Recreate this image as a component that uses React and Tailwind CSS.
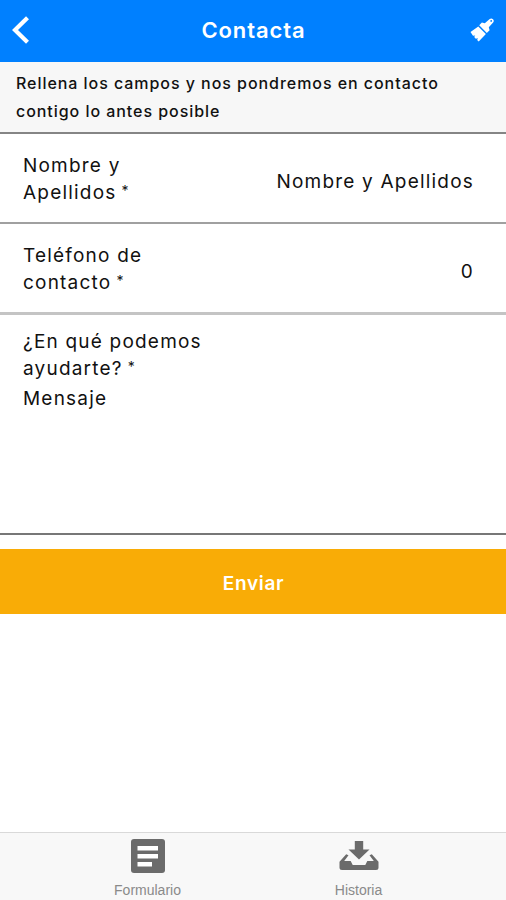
import clsx from 'clsx';

const fields = [
  {
    id: 'name',
    label: ['Nombre y', 'Apellidos'],
    value: 'Nombre y Apellidos',
    className: 'h-[90px] border-b-2 border-[#a0a0a0]',
  },
  {
    id: 'phone',
    label: ['Teléfono de', 'contacto'],
    value: '0',
    className: 'h-[91px] border-b-3 border-[#c4c4c4]',
  },
];

function BackIcon() {
  return (
    <svg width="17" height="28" viewBox="0 0 17 28" fill="none" stroke="white" strokeWidth="4.2">
      <path d="M15.5 1.8 3 14l12.5 12.2" />
    </svg>
  );
}

function BrushIcon() {
  return (
    <svg width="24" height="24" viewBox="0 0 24 24" fill="white">
      <path d="m.5 14 7.8-5.6 7.6 7.6-7.2 7.5-1.6-1.6.9-1.7-2.2.5-1.6-1.7 1-1.6-2.2.4Z" />
      <path d="m9.2 7.3 2.7-2.8 2.9.7 4.9-4.2a2.5 2.5 0 0 1 3.4 3.6l-4.3 4.7.8 3-2.8 2.7Z" />
      <circle cx="21.2" cy="2.9" r="0.9" fill="#0080ff" />
    </svg>
  );
}

function FormIcon() {
  return (
    <svg width="34" height="34" viewBox="0 0 34 34">
      <rect width="34" height="34" rx="3" fill="#6b6b6b" />
      <path d="M6.5 7H27v4.5H6.5zM6.5 15H27v4.5H6.5zM6.5 23H21v4.5H6.5z" fill="white" />
    </svg>
  );
}

function HistoryIcon() {
  return (
    <svg width="40" height="30" viewBox="0 0 40 30" fill="#6b6b6b">
      <path d="M15.8 0h8.4v8.5h6.3L20 18.5 9.5 8.5h6.3Z" />
      <path d="M9.5 14.2 5.2 20h6.5l2 4h12.6l2-4h6.5l-4.3-5.8 2.3-.9 6.7 7.4v5.8a2.5 2.5 0 0 1-2.5 2.5H3a2.5 2.5 0 0 1-2.5-2.5v-5.8l6.7-7.4Z" />
    </svg>
  );
}

// All the fields are required, so the last line always ends with the mark
function Label({ lines }) {
  return (
    <div>
      {lines.map((line, i) => (
        <div key={line}>
          {line}
          {i === lines.length - 1 && <span className="align-[3px] text-[14px] leading-none"> *</span>}
        </div>
      ))}
    </div>
  );
}

export default function App() {
  return (
    <div className="flex h-[900px] w-[506px] flex-col overflow-hidden bg-white font-['Inter',sans-serif] text-[#111]">
      <header className="grid h-[62px] shrink-0 grid-cols-[60px_1fr_60px] items-center bg-[#0080ff] text-white">
        <button className="pb-[3px] pl-3">
          <BackIcon />
        </button>
        <h1 className="pb-px pl-px text-center text-[22px] font-semibold tracking-[0.9px]">Contacta</h1>
        <button className="flex justify-end pr-3 pb-[2px]">
          <BrushIcon />
        </button>
      </header>

      <div className="h-[72px] shrink-0 border-b-2 border-[#858585] bg-[#f7f7f7] pt-[7px] pl-4 text-[16px] leading-7 font-medium tracking-[0.95px] whitespace-nowrap">
        <p>Rellena los campos y nos pondremos en contacto</p>
        <p>contigo lo antes posible</p>
      </div>

      <main className="text-[19px] leading-[27px] tracking-[1.2px]">
        {fields.map((field) => (
          <div
            key={field.id}
            className={clsx('flex items-center justify-between pt-[2px] pr-8 pl-[23px]', field.className)}
          >
            <Label lines={field.label} />
            <div className="pt-[5px]">{field.value}</div>
          </div>
        ))}

        <div className="h-[220px] border-b-2 border-[#777] pt-[13px] pl-[23px]">
          <Label lines={['¿En qué podemos', 'ayudarte?']} />
          <div className="pt-[3px]">Mensaje</div>
        </div>
      </main>

      <button className="mt-[14px] h-[65px] w-full shrink-0 bg-[#f9ac06] pt-[5px] pl-px text-[19px] font-semibold tracking-[0.7px] text-white">
        Enviar
      </button>

      <nav className="mt-auto flex h-[68px] shrink-0 justify-center gap-[111px] border-t border-[#d9d9d9] bg-[#f8f8f8] font-['Liberation_Sans',sans-serif] text-[14px] leading-4 text-[#8a8a8a]">
        <div className="flex w-[100px] flex-col items-center pt-[6px]">
          <FormIcon />
          <span className="mt-[9px]">Formulario</span>
        </div>
        <div className="flex w-[100px] flex-col items-center pt-[8px]">
          <HistoryIcon />
          <span className="mt-[11px]">Historia</span>
        </div>
      </nav>
    </div>
  );
}
